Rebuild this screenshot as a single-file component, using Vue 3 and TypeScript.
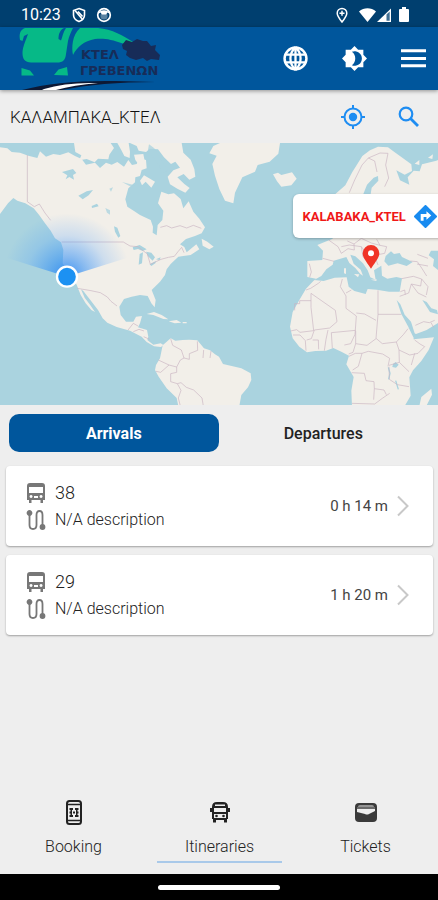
<script setup lang="ts">
import { ref } from 'vue'

type Direction = 'arrivals' | 'departures'

interface Arrival {
  line: string
  description: string
  eta: string
}

const direction = ref<Direction>('arrivals')
const stop = ref('ΚΑΛΑΜΠΑΚΑ_ΚΤΕΛ')
const arrivals: Arrival[] = [
  { line: '38', description: 'N/A description', eta: '0 h 14 m' },
  { line: '29', description: 'N/A description', eta: '1 h 20 m' },
]
</script>

<template>
  <div class="screen">
    <div class="status">
      <span class="clock">10:23</span>
      <svg class="s-icon" viewBox="0 0 16 16" fill="none" stroke="#fff" stroke-width="1.6">
        <path d="M8 1.5 13.5 3.5V8c0 3-2.400 5.400-5.500 6.600C4.900 13.400 2.500 11 2.500 8V3.500z" />
        <path d="M4 3.500 12 13M7 4.500l4.500 5" />
      </svg>
      <svg class="s-icon round" viewBox="0 0 16 16">
        <circle cx="8" cy="8" r="6.300" fill="none" stroke="#fff" stroke-width="1.700" />
        <path d="M2 7C3 2 13 2 14 7L11.500 5.500 10 7.500H6L4.500 5.500z" fill="#fff" />
        <circle cx="8" cy="9" r="3.600" fill="#fff" opacity=".35" />
      </svg>
      <span class="spacer"></span>
      <svg class="s-icon" viewBox="0 0 16 16" fill="none" stroke="#fff" stroke-width="1.500">
        <path d="M8 15C5 11.200 3.200 8.800 3.200 6.200a4.800 4.800 0 0 1 9.600 0C12.800 8.800 11 11.200 8 15zM8 3.800v5M5.500 6.300h5" />
      </svg>
      <svg class="signal" viewBox="0 0 34 16">
        <path d="M0 4.500C5 .3 12 .3 17 4.500L8.500 15z" fill="#fff" />
        <path d="M32 1.500V15H18z" fill="#fff" />
        <path d="M27.500 7.500 30.700 4.400V13.700H27.500z" fill="#003f6f" opacity=".75" />
      </svg>
      <svg class="battery" viewBox="0 0 12 16"><path d="M4 0h4v2h2q1 0 1 1v11q0 1-1 1H2q-1 0-1-1V3q0-1 1-1h2z" fill="#fff" /></svg>
    </div>

    <header class="topbar">
      <svg class="logo" viewBox="0 0 170 63" role="img" aria-label="ΚΤΕΛ ΓΡΕΒΕΝΩΝ">
        <g fill="#06b987">
          <path d="M25 1H73C71 5 69 9 68 14L66 27C65.500 33 63 35.500 57 35.500H31C25 35.500 22.500 32 22.500 26C22.500 20 26 13 28 7L24 9 22.500 14 20 13C19 7 20 3 25 1z" />
          <path d="M80 1H98C112 2 124 9 133 15L123 16.500C111 12 103 11 95 12 84 14 77 20 73 28C71.500 21 72 8 80 1z" />
          <path d="M21.500 41 30 43.500 34 48.500H21.500zM54 48 58.500 42.500 67 40 68 48.500z" />
        </g>
        <path d="M64 1C60 3 58.500 7 58.500 12L61 13.500C62.500 10 63 5 66 1z" fill="#00569c" />
        <path d="M122 18 126 13 132 15 137 12 143 14 147 14 151 19 156 18 155 23 160 28 159 33 151 32 147 34 143 31 136 33 130 31 126 28 127 24 123 22z" fill="#172c58" />
        <text x="81" y="32" class="logo-text">ΚΤΕΛ</text>
        <text x="80" y="48" class="logo-text">ΓΡΕΒΕΝΩΝ</text>
        <path d="M22 63Q60 53 116 54L155 55Q100 55 62 63z" fill="#0d1935" />
        <path d="M44 62Q66 55 98 56 74 58 56 63H42z" fill="#fff" />
      </svg>
      <span class="spacer"></span>
      <button class="icon-btn" type="button" aria-label="Language">
        <svg viewBox="0 0 24 24">
          <circle cx="12" cy="12" r="10.500" fill="none" stroke="#fff" stroke-width="2.400" />
          <path d="M12 1v22M2 8.300h20M2 15.700h20M12 1C5.500 7 5.500 17 12 23M12 1C18.500 7 18.500 17 12 23" fill="none" stroke="#fff" stroke-width="2.200" />
        </svg>
      </button>
      <button class="icon-btn" type="button" aria-label="Theme">
        <svg viewBox="0 0 24 24">
          <path d="M20.500 8.500V3.500H15.500L12 0 8.500 3.500H3.500V8.500L0 12 3.500 15.500V20.500H8.500L12 24 15.500 20.500H20.500V15.500L24 12z" fill="#fff" />
          <path d="M9.500 5.500a7 7 0 1 1 0 13C13.800 15.500 13.800 8.500 9.500 5.500z" fill="#00569c" />
        </svg>
      </button>
      <button class="icon-btn" type="button" aria-label="Menu">
        <svg viewBox="0 0 24 24"><path d="M0 4.500H24M0 12H24M0 19H24" stroke="#fff" stroke-width="2.800" /></svg>
      </button>
    </header>

    <form class="search" @submit.prevent>
      <input v-model="stop" type="text" aria-label="Stop" />
      <button type="button" aria-label="My location">
        <svg viewBox="0 0 24 24">
          <g fill="none" stroke="#1e8df2" stroke-width="2"><circle cx="12" cy="12" r="8.500" /><path d="M12 0V4M12 20v4M0 12H4M20 12h4" /></g>
          <circle cx="12" cy="12" r="4.200" fill="#1e8df2" />
        </svg>
      </button>
      <button type="submit" aria-label="Search">
        <svg viewBox="0 0 24 24" fill="none" stroke="#1e8df2">
          <circle cx="9" cy="9" r="6.300" stroke-width="2.200" /><path d="M13.500 13.500 21 21" stroke-width="2.800" />
        </svg>
      </button>
    </form>

    <section class="map">
      <svg class="world" viewBox="0 9 1314 786" preserveAspectRatio="xMidYMid slice">
        <defs>
          <radialGradient id="beam" gradientUnits="userSpaceOnUse" cx="201" cy="410" r="190">
            <stop offset="0" stop-color="#2484f5" stop-opacity=".9" />
            <stop offset=".3" stop-color="#2c8cf5" stop-opacity=".55" />
            <stop offset=".65" stop-color="#3c96ff" stop-opacity=".2" />
            <stop offset="1" stop-color="#3c96ff" stop-opacity="0" />
          </radialGradient>
        </defs>
        <rect y="0" width="1314" height="800" fill="#aad3df" />
        <g fill="#f2efe9">
          <path d="M0 22 22 25 35 36 60 38 85 47 112 54 120 34 138 50 160 42 180 45 205 37 225 48 245 57 258 74 285 68 300 84 318 68 335 74 352 66 372 80 385 60 396 75 410 72 418 55 438 60 440 85 425 90 420 108 406 112 405 127 385 145 376 178 382 200 402 213 420 225 452 240 459 260 458 278 470 286 473 255 487 240 490 212 474 190 484 155 505 163 522 160 542 177 550 205 566 184 580 215 598 236 615 262 605 280 585 288 558 297 540 313 553 321 560 337 589 313 598 328 572 345 550 348 535 350 512 372 500 388 495 405 480 425 455 450 467 480 464 502 454 490 443 468 420 465 395 470 372 477 358 500 362 525 378 545 400 545 408 530 426 528 420 550 414 562 441 570 445 590 442 600 460 614 482 610 490 615 483 621 462 619 440 606 425 590 390 572 350 561 322 548 308 535 294 510 275 485 250 453 243 448 254 473 270 494 285 516 274 510 257 490 242 465 230 434 205 400 188 370 190 330 183 307 165 295 152 272 135 250 118 226 101 205 76 190 52 182 40 174 24 190 0 222z" />
          <path d="M222 9 332 9 342 24 328 44 325 58 294 56 284 67 260 57 238 61 244 46 226 36zM352 9 386 9 390 35 389 54 373 48 365 32zM402 44 430 42 434 62 418 76 406 60z" />
          <path d="M390 9 545 9 550 38 572 59 583 87 586 110 568 119 551 102 532 112 553 132 569 144 556 158 532 146 510 133 503 110 520 91 540 83 526 65 513 72 492 52 474 28 450 26 438 36 416 32 410 18zM432 106 450 116 465 125 454 143 437 125 426 136 420 122z" />
          <path d="M660 9 640 18 628 40 650 47 637 72 645 107 658 147 675 182 700 190 705 158 727 112 765 95 773 75 809 65 835 41 840 9zM605 296 622 305 641 320 628 328 608 317z" />
          <path d="M440 522 462 516 485 525 505 538 490 537 460 525zM506 544 530 540 544 548 524 550zM548 546 560 546 560 550 548 550z" />
          <path d="M488 616 512 595 526 602 548 600 568 599 592 601 612 625 630 631 645 643 657 650 669 672 695 678 724 685 752 700 754 720 744 742 724 765 718 798H535L530 774 500 745 476 710 465 690 468 675 480 655z" />
        </g>
        <g transform="translate(654 0)" fill="#f2efe9">
          <path d="M165 103 180 98 190 105 222 97 236 116 220 136 190 140 177 124z" />
          <path d="M352 162 382 136 403 96 420 69 433 48 456 31 480 20 510 22 526 34 551 52 580 73 582 93 560 104 535 91 546 121 574 134 569 112 587 92 605 94 612 73 655 62 660 60V549L626 570 592 583 586 598 648 592 632 630 610 663 585 691 574 712 578 767 560 798H402L400 752 407 711 385 673 393 647 370 635 346 624 324 632 292 633 267 637 244 620 224 595 216 560 224 516 244 480 264 446 286 423 294 416 268 411 268 363 313 360 315 332 298 315 320 306 344 296z" />
          <path d="M640 746 642 764 625 798H604L610 771zM590 71 604 60 604 75zM630 53 645 43 643 57zM154 17 182 13 175 29 155 27z" />
        </g>
        <g transform="translate(654 0)" fill="#aad3df">
          <path d="M288 420 310 408 325 388 344 374 347 362 385 351 394 369 412 384 427 402 435 407 428 389 407 371 397 344 412 349 435 370 449 391 457 412 473 419 468 391 490 377 492 407 508 416 535 411 552 415 545 455 513 455 476 449 449 447 443 462 409 453 392 440 386 412 350 413 317 423z" />
          <path d="M503 348 519 334 528 342 545 339 552 351 584 366 566 378 539 370 511 377 499 364zM639 332 660 332 660 390 645 378 648 358 632 346zM536 480 547 493 560 524 579 545 590 580 606 590 589 598 570 559 550 522zM613 480 626 486 640 505 657 510 660 523 636 516zM436 162 447 134 467 113 480 108 481 122 461 143 458 162zM525 672 533 666 542 674 534 683 523 681z" />
          <path d="M511 682 516 700 512 718M533 722 541 748" fill="none" stroke="#aad3df" stroke-width="4" />
        </g>
        <g transform="translate(654 0)" fill="#f2efe9"><path d="M378 385 384 385 384 402 378 400zM408 402 424 403 420 412zM458 419 476 418 475 423z" /></g>
        <g fill="#aad3df">
          <path d="M186 96 205 91 219 87 229 99 219 105 222 119 208 111 197 118 202 106zM235 167 260 154 279 150 266 166 248 178zM275 198 291 191 296 199 276 204zM342 259 352 263 361 288 355 293 345 275zM398 322 419 315 440 328 428 333 414 327 401 330zM419 342 429 337 426 370 416 374zM438 335 454 338 465 352 458 362 444 349zM449 373 468 363 466 370 454 378zM468 358 482 352 479 360z" />
          <path d="M316 204 330 211 330 224 321 218zM328 146 339 142 333 155zM447 13 463 25 489 68 504 91 486 99 476 75 459 52 443 35zM366 126 389 132 404 136 390 139z" opacity=".75" />
        </g>
        <g class="borders">
          <path d="M82 45V185L103 200 118 192 135 219 152 241M185 306H370L390 318 414 320 442 342 451 373 483 358 505 352 523 349 534 335 545 322 552 338M232 445 273 452 301 458 322 471 333 484 351 498M384 570 400 550 414 558M400 575 417 568 432 573M431 590 449 598M481 262 500 257 515 264 540 257 560 264 580 256 604 265" />
          <path d="M512 596 518 616 544 630 552 654 568 658 568 641 593 631 592 604M611 630 609 654M633 633 630 654M468 694 482 697 507 675 530 681 541 660 552 654M507 675 475 660M530 681 530 697 512 701 512 725 532 731 543 728 559 742 581 750 606 774 610 798M532 731 543 751 535 774 541 798" />
        </g>
        <g transform="translate(654 0)" class="borders">
          <path d="M394 158 410 120 432 75 451 54 470 63 477 96M451 54 486 39 510 40 503 75 512 114 500 140M274 371 280 396 275 412M314 355 348 364M332 300 360 320 370 340 390 326 409 330 408 312 388 303M370 320 394 315 430 320 445 340 469 345 480 375M408 312 430 295 460 309 486 316 506 320 500 340 475 345M430 320 435 350 456 372M486 316 476 298M598 343 630 355M577 363 598 365 611 384 626 408M597 372 630 378" />
          <path d="M264 450 278 445 301 430 308 424M373 417 367 440 384 468 384 505 415 528 411 583 398 611 379 615M384 459 400 450M480 451V523H550M480 523 474 595 493 611 535 606 556 584 570 566M415 519 440 522 474 541M230 511V491H245V482H279V460L352 511 357 545 335 564 289 570 280 596 266 600M218 573 236 569 246 577 287 572 279 502 279 482M225 585H246L262 602 264 632M284 600 301 600 302 628M319 632 324 598 330 570M343 625 340 578 413 571M413 573 413 611 405 637 392 642M413 611 447 616 474 596M393 649 412 640 432 640 421 679 404 690M432 640 451 634 494 642 515 655 510 679M535 606 543 630 575 645 600 640 620 620 606 612 590 600M543 630 544 667 513 676M544 667 573 695M590 640 580 675M401 698 439 700 444 722 468 725 469 746 498 750 505 764M513 680 514 718 538 734 573 740M402 790 470 792 493 775 515 760M469 746 467 779M551 416 586 409 611 417 608 438 580 432 572 459 545 469M611 417 630 440 625 465M580 432 600 459 625 471M547 455 560 450 562 464M592 556 617 545 634 548 650 541M639 548 647 562" />
        </g>
        <path d="M201 410 10 350V215H392V350z" fill="url(#beam)" />
        <circle cx="201" cy="410" r="30" fill="#1c91f2" stroke="#fff" stroke-width="7" />
        <g transform="translate(654 0)">
          <path d="M459 386C441 360 434 350 434 340a25 25 0 0 1 50 0C484 350 477 360 459 386z" fill="#f03426" />
          <circle cx="459" cy="340" r="9" fill="#fff" />
        </g>
      </svg>
      <a class="popup" href="#directions">
        <span>KALABAKA_KTEL</span>
        <svg viewBox="0 0 24 24">
          <path d="M12 1 23 12 12 23 1 12z" fill="#188bf0" stroke="#188bf0" stroke-width="2" stroke-linejoin="round" />
          <path d="M7 16.500V9.500H13V6.500L18 11 13 15.500V12.500H10V16.500z" fill="#fff" />
        </svg>
      </a>
    </section>

    <div class="tabs" role="tablist">
      <button type="button" role="tab" :aria-selected="direction === 'arrivals'" :class="{ active: direction === 'arrivals' }" @click="direction = 'arrivals'">Arrivals</button>
      <button type="button" role="tab" :aria-selected="direction === 'departures'" :class="{ active: direction === 'departures' }" @click="direction = 'departures'">Departures</button>
    </div>

    <main class="list">
      <a v-for="item in arrivals" :key="item.line" class="card" href="#itinerary">
        <div class="info">
          <div class="row">
            <svg viewBox="0 0 20 22" fill="#777">
              <path fill-rule="evenodd" d="M1 4Q1 1 4 1H16Q19 1 19 4V18H17V21H14.500V18H5.500V21H3V18H1zM3 5V11H17V5zM5 13a1.500 1.500 0 1 0 .1 0zM15 13a1.500 1.500 0 1 0 .1 0zM8 14V16H12V14z" />
            </svg>
            <strong>{{ item.line }}</strong>
          </div>
          <div class="row">
            <svg viewBox="0 0 20 22" fill="none" stroke="#777" stroke-width="1.800">
              <path d="M3.500 4V16Q3.500 20 7 20T10.500 16V6Q10.500 2 13.500 2T16.500 6V18" />
              <circle cx="3.500" cy="4" r="2" fill="#777" /><circle cx="16.500" cy="18" r="2" fill="#777" />
            </svg>
            <span>{{ item.description }}</span>
          </div>
        </div>
        <span class="eta">{{ item.eta }}</span>
        <svg class="chevron" viewBox="0 0 14 22"><path d="M2 1.500 11.500 11 2 20.500" fill="none" stroke="#c8c8c8" stroke-width="2" /></svg>
      </a>
    </main>

    <nav class="bottom">
      <a href="#booking">
        <svg viewBox="0 0 26 26">
          <rect x="6" y="1" width="14" height="23" rx="2.500" fill="none" stroke="#222" stroke-width="2" />
          <path d="M6 4.500H20M6 20.500H20" stroke="#222" stroke-width="1.500" />
          <path d="M8.500 8H12V10H11V15H12V17H8.500V15H9.500V13.500H8.500V11.500H9.500V10H8.500zM17.500 8H14V10H15V15H14V17H17.500V15H16.500V13.500H17.500V11.500H16.500V10H17.500zM12 11.500H14V13.500H12z" fill="#222" />
        </svg>
        <span>Booking</span>
      </a>
      <a href="#itineraries" class="current">
        <svg viewBox="0 0 26 26" fill="#222">
          <path fill-rule="evenodd" d="M5 7Q5 2 10 2H16Q21 2 21 7V19H20V22.500H17V20H9V22.500H6V19H5zM7 8V12H19V8zM8 4.500V6H18V4.500zM7 14V18H19V14z" />
          <path d="M3 8H5V12H3zM21 8H23V12H21z" /><circle cx="9.500" cy="16" r="1.300" /><circle cx="16.500" cy="16" r="1.300" />
        </svg>
        <span>Itineraries</span>
      </a>
      <a href="#tickets">
        <svg viewBox="0 0 26 26">
          <rect x="2" y="3" width="22" height="19" rx="4" fill="#3a3a3a" />
          <path d="M5 6.500Q5 5.500 7 5.500H19Q21 5.500 21 6.500zM4 9H22V11L16 14Q14 15 12 14L4 12z" fill="#eee" />
          <path d="M4 8H22" stroke="#999" />
        </svg>
        <span>Tickets</span>
      </a>
    </nav>
    <div class="system"><i></i></div>
  </div>
</template>

<style>
body { margin: 0; background: #eee; }
</style>

<style scoped>
.screen { min-height: 100vh; display: flex; flex-direction: column; background: #eee; color: #222; font-family: Roboto, "Liberation Sans", sans-serif; font-size: 16px; font-weight: 300; overflow: hidden; }
.screen * { box-sizing: border-box; }
svg { display: block; flex: none; }
button { border: 0; padding: 0; background: none; font: inherit; cursor: pointer; }
a { color: inherit; text-decoration: none; }
.spacer { flex: 1; }
.status { display: flex; align-items: center; height: 27px; padding: 2px 28px 0 21px; background: #003f6f; color: #fff; font-weight: 400; }
.clock { margin-right: 10px; }
.s-icon { width: 16px; height: 16px; }
.round { margin-left: 9px; }
.signal { width: 34px; height: 16px; margin-left: 9px; }
.battery { width: 12px; height: 16px; margin-left: 5px; }
.topbar { display: flex; align-items: center; gap: 34px; height: 63px; padding-right: 12px; background: #00569c; box-shadow: 0 1px 4px #0006; z-index: 1; }
.logo { width: 170px; height: 63px; }
.logo-text { font-family: "DejaVu Sans", sans-serif; font-weight: 700; font-size: 13px; fill: #172c58; }
.icon-btn, .icon-btn svg { width: 25px; height: 25px; }
.search { display: flex; align-items: center; gap: 32px; height: 53px; padding: 0 17px 0 10px; background: #eee; }
.search input { flex: 1; min-width: 0; border: 0; padding: 0; outline: 0; background: transparent; color: #111; font: inherit; font-size: 17px; }
.search button, .search svg { width: 24px; height: 24px; }
.map { position: relative; overflow: hidden; }
.world { width: 100%; height: auto; }
.borders path { fill: none; stroke: #c9b3c1; stroke-width: 3; stroke-linejoin: round; opacity: 0.65; }
.popup { position: absolute; left: 67%; top: 51px; display: flex; align-items: center; gap: 8px; height: 44px; padding: 0 10px 0 9px; border-radius: 6px; background: #fff; box-shadow: 0 1px 3px #0004; color: #f01818; font-size: 13px; font-weight: 700; }
.popup svg { width: 23px; height: 23px; }
.tabs { display: flex; padding: 9px 10px 14px 9px; }
.tabs button { flex: 1; height: 38px; border-radius: 10px; color: #222; font-weight: 500; font-size: 16px; }
.tabs .active { background: #00569c; color: #fff; font-weight: 700; }
.list { display: flex; flex-direction: column; gap: 9px; padding: 0 5px 0 6px; }
.card { display: flex; align-items: center; height: 80px; padding: 0 23px 0 20px; border-radius: 4px; background: #fff; box-shadow: 0 1px 2px #0005; }
.info { flex: 1; display: grid; gap: 3px; }
.row { display: flex; align-items: center; gap: 9px; height: 24px; }
.row svg { width: 20px; height: 22px; }
.row strong { font-size: 18px; font-weight: inherit; }
.eta { font-size: 15px; font-weight: 400; color: #444; }
.chevron { width: 14px; height: 22px; margin-left: 8px; }
.bottom { display: flex; margin-top: auto; }
.bottom a { flex: 1; display: flex; flex-direction: column; align-items: center; margin: 0 10px 11px 11px; padding-bottom: 4px; border-bottom: 2px solid transparent; }
.bottom svg { width: 26px; height: 26px; margin-bottom: 11px; }
.bottom span { line-height: 20px; }
.bottom .current { border-color: #a9c9e9; }
.system { display: flex; align-items: center; justify-content: center; height: 26px; background: #000; }
.system i { width: 122px; height: 5px; border-radius: 3px; background: #fff; }
</style>
